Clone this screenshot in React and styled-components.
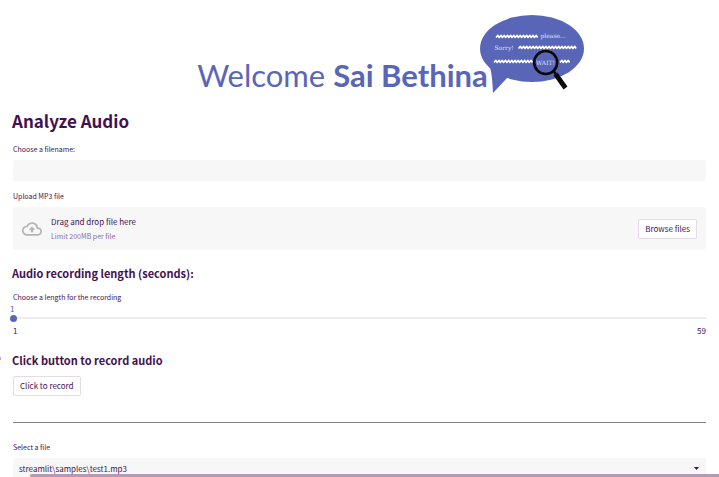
import React, { useState } from 'react';
import styled, { createGlobalStyle } from 'styled-components';

const GlobalStyle = createGlobalStyle`
    *{
        box-sizing:border-box;
    }
    body{
        margin:0;
        background:#FFF;
        color:#43114F;
        font-family:"Noto Sans CJK SC", "Noto Sans", sans-serif;
    }
    button, input, select{
        font-family:inherit;
        color:inherit;
    }
`;

const Page = styled.div`
    height:100vh;
    overflow:hidden;
    padding:15px 13px 0;
    position:relative;
`;

const Hero = styled.header`
    display:flex;
    justify-content:center;
    align-items:flex-end;
    height:79px;
    padding-left:62px;
`;

const Welcome = styled.div`
    font-family:Lato, sans-serif;
    font-size:31px;
    line-height:38px;
    font-weight:400;
    color:#5966B8;
    white-space:nowrap;
    strong{
        font-weight:700;
    }
`;

const Logo = styled.svg`
    width:104px;
    height:79px;
    flex:none;
    margin-left:-8px;
    text{
        font-family:"DejaVu Serif", serif;
        font-size:6px;
        fill:#DDE0F7;
    }
`;

const Title = styled.h1`
    margin:14px 0 10px -1px;
    font-size:17px;
    line-height:26px;
    font-weight:700;
`;

const Subtitle = styled.h2`
    margin:0 0 ${(props) => props.$space || 0}px -1px;
    font-size:11px;
    line-height:18px;
    font-weight:700;
`;

const Label = styled.label`
    display:block;
    font-size:7px;
    line-height:10px;
    margin-bottom:${(props) => (props.$tight ? 2 : 6)}px;
`;

const Field = styled.div`
    margin-bottom:${(props) => props.$space || 0}px;
`;

const TextInput = styled.input`
    display:block;
    width:100%;
    height:21px;
    padding:0 6px;
    border:0;
    border-radius:2px;
    background:#F7F7F7;
    font-size:8px;
`;

const DropZone = styled.div`
    display:flex;
    align-items:center;
    height:43px;
    padding:0 9px;
    border-radius:2px;
    background:#F7F7F7;
    svg{
        width:20px;
        height:20px;
        margin-right:9px;
        fill:#B5B5B5;
    }
`;

const DropText = styled.div`
    flex:1;
    font-size:8px;
    line-height:14px;
    small{
        display:block;
        font-size:7px;
        color:#8F6B98;
    }
`;

const Button = styled.button`
    display:block;
    height:20px;
    padding:0 6px;
    border:1px solid #E3DBE6;
    border-radius:2px;
    background:#FFF;
    font-size:8px;
    line-height:16px;
`;

const SliderValue = styled.output`
    display:block;
    margin-left:-3px;
    font-size:8px;
    line-height:10px;
    color:#5966B8;
`;

const Track = styled.div`
    height:8px;
    background:linear-gradient(#ECECEC, #ECECEC) center / 100% 2px no-repeat;
`;

const Range = styled.input`
    display:block;
    appearance:none;
    width:calc(100% + 6px);
    height:8px;
    margin:0 -3px;
    background:transparent;
    &::-webkit-slider-thumb{
        appearance:none;
        width:7px;
        height:7px;
        border-radius:50%;
        background:#5966B8;
    }
`;

const Limits = styled.div`
    display:flex;
    justify-content:space-between;
    margin-top:4px;
    font-size:8px;
    line-height:10px;
`;

const Divider = styled.hr`
    margin:26px 0 19px;
    border:0;
    border-top:1px solid #858585;
`;

const SelectBox = styled.div`
    position:relative;
    svg{
        position:absolute;
        right:7px;
        top:9px;
        width:5px;
        height:3px;
        fill:#43114F;
        pointer-events:none;
    }
`;

const Select = styled.select`
    display:block;
    appearance:none;
    width:100%;
    height:21px;
    padding:0 6px;
    border:0;
    border-radius:2px;
    background:#F7F7F7;
    font-size:8px;
`;

const ScrollBar = styled.div`
    position:absolute;
    left:30px;
    right:0;
    bottom:0;
    height:3px;
    border-radius:2px 0 0 2px;
    background:#B39BB8;
`;

const AnchorMark = styled.span`
    position:absolute;
    left:0;
    top:357px;
    width:1px;
    height:3px;
    background:#C3A6CB;
`;

// zigzag line starting at x, n teeth wide
const scribble = (x, y, n) => {
    let d = `M${x} ${y + 1}`;
    for (let i = 0; i < n; i++) {
        d += 'l1.9 -2.2l1.3 2.2';
    }
    return d;
};

const SpeechLogo = () => (
    <Logo viewBox="0 0 104 79" aria-hidden="true">
        <path d="M9 49Q12 56 13 78L28 62Z" fill="#5966B8" />
        <ellipse cx="52" cy="33.5" rx="52" ry="33.5" fill="#5966B8" />
        <g fill="none" stroke="#FFF" strokeWidth="1.6" strokeLinejoin="round">
            <path d={scribble(16, 21.5, 13)} />
            <path d={scribble(38.5, 32.5, 18)} />
            <path d={scribble(14, 46.5, 12)} />
            <path d={scribble(80, 46.5, 3)} />
        </g>
        <text x="60.5" y="22.7">please...</text>
        <text x="14.5" y="35.3">Sorry!</text>
        <text x="56" y="50">WAIT!</text>
        <circle cx="65.7" cy="47.5" r="11.5" fill="none" stroke="#090909" strokeWidth="2.6" />
        <path d="M73.5 56L76 59.5" stroke="#090909" strokeWidth="2.6" />
        <path d="M75.5 59L85.5 73" stroke="#090909" strokeWidth="4.8" />
    </Logo>
);

const App = () => {
    const [length, setLength] = useState(1);

    return (
        <>
            <GlobalStyle />
            <Page>
                <Hero>
                    <Welcome>Welcome <strong>Sai Bethina</strong></Welcome>
                    <SpeechLogo />
                </Hero>

                <Title>Analyze Audio</Title>
                <Field $space={10}>
                    <Label htmlFor="filename">Choose a filename:</Label>
                    <TextInput id="filename" type="text" />
                </Field>
                <Field $space={14}>
                    <Label htmlFor="browse">Upload MP3 file</Label>
                    <DropZone>
                        <svg viewBox="0 0 24 24" aria-hidden="true">
                            <path d="M19.35 10.04A7.49 7.49 0 0 0 12 4C9.11 4 6.6 5.64 5.35 8.04A5.994 5.994 0 0 0 0 14c0 3.31 2.69 6 6 6h13c2.76 0 5-2.24 5-5 0-2.64-2.05-4.78-4.65-4.96zM19 18H6c-2.21 0-4-1.79-4-4 0-2.05 1.53-3.76 3.56-3.97l1.07-.11.5-.95A5.469 5.469 0 0 1 12 6c2.62 0 4.88 1.86 5.39 4.43l.3 1.5 1.53.11A2.98 2.98 0 0 1 22 15c0 1.65-1.35 3-3 3zM8 13h2.55v3h2.9v-3H16l-4-4z" />
                        </svg>
                        <DropText>
                            Drag and drop file here
                            <small>Limit 200MB per file</small>
                        </DropText>
                        <Button id="browse" type="button">Browse files</Button>
                    </DropZone>
                </Field>

                <Subtitle $space={10}>Audio recording length (seconds):</Subtitle>
                <Field $space={15}>
                    <Label htmlFor="length" $tight>Choose a length for the recording</Label>
                    <SliderValue htmlFor="length">{length}</SliderValue>
                    <Track>
                        <Range
                            id="length"
                            type="range"
                            min="1"
                            max="59"
                            value={length}
                            onChange={(e) => setLength(e.target.value)}
                        />
                    </Track>
                    <Limits>
                        <span>1</span>
                        <span>59</span>
                    </Limits>
                </Field>

                <Subtitle $space={7}>Click button to record audio</Subtitle>
                <Button type="button">Click to record</Button>
                <Divider />

                <Label htmlFor="sample">Select a file</Label>
                <SelectBox>
                    <Select id="sample">
                        <option>streamlit\samples\test1.mp3</option>
                    </Select>
                    <svg viewBox="0 0 5 3" aria-hidden="true">
                        <path d="M0 0H5L2.5 3Z" />
                    </svg>
                </SelectBox>
                <AnchorMark />
                <ScrollBar />
            </Page>
        </>
    );
};

export default App;
